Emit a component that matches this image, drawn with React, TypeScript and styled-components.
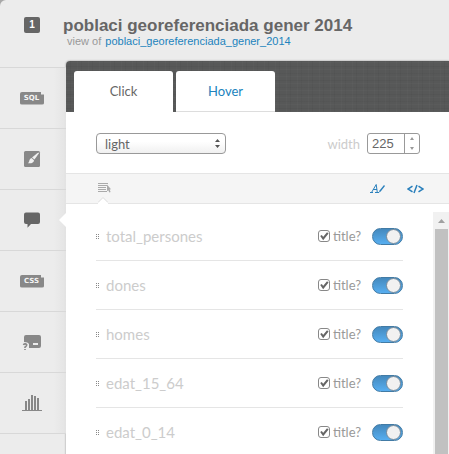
import React, { useState } from "react";
import styled, { createGlobalStyle } from "styled-components";

const sans = '"Liberation Sans", Arial, sans-serif';
const lato = 'Lato, "Open Sans", sans-serif';

const GlobalStyle = createGlobalStyle`
  * { box-sizing: border-box; }
  body { margin: 0; background: #a8a8a8; font-family: ${lato}; color: #666; }
  button, input, select { font-family: inherit; }
`;

const Shell = styled.div`
  display: grid;
  grid-template-columns: 66px minmax(0, 1fr);
  height: 100vh;
  overflow: hidden;
  background: #ececec;
  border-top-left-radius: 6px;
`;

const Sidebar = styled.nav`
  display: flex;
  flex-direction: column;
`;

const SideItem = styled.button<{ $first?: boolean; $active?: boolean }>`
  position: relative;
  flex: none;
  display: flex;
  align-items: center;
  justify-content: center;
  width: 100%;
  height: ${(p) => (p.$first ? 68 : 61)}px;
  padding: ${(p) => (p.$first ? "0 2px 17px 0" : "0 2px 0 0")};
  border: 0;
  border-bottom: 1px solid #d8d8d8;
  background: ${(p) =>
    p.$first ? "transparent" : "linear-gradient(90deg, transparent 54px, #e4e4e4)"};
  color: ${(p) => (p.$active ? "#666" : "#888")};
  cursor: pointer;

  svg { display: block; overflow: visible; }

  &::after {
    content: "";
    display: ${(p) => (p.$active ? "block" : "none")};
    position: absolute;
    z-index: 2;
    right: 0;
    top: 23px;
    border: 7px solid transparent;
    border-right-color: #fff;
    border-left: 0;
  }
`;

const CountBadge = styled.span`
  width: 16px;
  height: 16px;
  border-radius: 2px;
  background: #666;
  color: #fff;
  font: bold 10px/16px ${sans};
`;

const CodeBadge = styled.span`
  width: 24px;
  height: 13px;
  padding-right: 1px;
  border-radius: 2px;
  background: #888;
  clip-path: polygon(0 0, 21px 0, 21px 3px, 100% 3px, 100% 100%, 0 100%);
  color: #f4f4f4;
  font: bold 7px/13px "DejaVu Sans", sans-serif;
  text-align: center;
`;

const Main = styled.main`
  display: flex;
  flex-direction: column;
  min-width: 0;
`;

const Header = styled.header`
  flex: none;
  height: 61px;
  margin-left: -3px;
  padding-top: 16px;
  white-space: nowrap;
`;

const Title = styled.h1`
  margin: 0;
  font: bold 17px/19px ${sans};
  color: #666;
`;

const Subtitle = styled.p`
  margin: 0 0 0 4px;
  font: 11px/13px ${sans};
  color: #999;

  a { margin-left: 1px; color: #2183bd; text-decoration: none; }
`;

const Panel = styled.section`
  flex: 1;
  display: flex;
  flex-direction: column;
  min-height: 0;
  background: #fff;
  border-top-left-radius: 4px;
  box-shadow: 0 0 2px rgba(0, 0, 0, 0.45);
`;

const Tabs = styled.div`
  flex: none;
  display: flex;
  gap: 3px;
  padding: 10px 8px 0;
  border-top-left-radius: 4px;
  background:
    repeating-linear-gradient(90deg, rgba(255, 255, 255, 0.02) 0 1px, transparent 1px 4px, rgba(0, 0, 0, 0.03) 4px 5px, transparent 5px 11px),
    repeating-linear-gradient(0deg, rgba(255, 255, 255, 0.02) 0 1px, transparent 1px 3px, rgba(0, 0, 0, 0.03) 3px 4px, transparent 4px 7px),
    #575858;
`;

const Tab = styled.button<{ $active: boolean }>`
  width: 99px;
  height: 41px;
  padding: 0;
  border: 0;
  border-bottom: 1px solid ${(p) => (p.$active ? "#fff" : "#ddd")};
  border-radius: 3px 3px 0 0;
  background: #fff;
  color: ${(p) => (p.$active ? "#666" : "#2183bd")};
  font-size: 13px;
  cursor: pointer;
`;

const Settings = styled.div`
  flex: none;
  display: flex;
  align-items: center;
  justify-content: space-between;
  height: 61px;
  padding: 2px 29px 0 30px;
`;

const SelectBox = styled.label`
  position: relative;
  display: block;
  width: 130px;

  select {
    appearance: none;
    width: 100%;
    height: 21px;
    padding: 0 8px;
    border: 1px solid #999;
    border-radius: 4px;
    background: linear-gradient(#fff 40%, #f0f0f0);
    color: #666;
    font-size: 13px;
  }
  svg { position: absolute; right: 6px; top: 6px; pointer-events: none; }
`;

const WidthField = styled.label`
  display: flex;
  align-items: center;
  gap: 7px;
  color: #ccc;
  font-size: 13px;
`;

const Spinner = styled.span`
  display: flex;
  width: 53px;
  height: 21px;
  border: 1px solid #999;
  border-radius: 3px;
  background: #fff;

  input {
    width: 36px;
    padding: 0 4px;
    border: 0;
    background: none;
    color: #666;
    font: 13px ${sans};
  }
`;

const Steps = styled.span`
  flex: 1;
  display: flex;
  flex-direction: column;
  border-left: 1px solid #999;

  button {
    flex: 1;
    display: flex;
    align-items: center;
    justify-content: center;
    padding: 0;
    border: 0;
    background: none;
    color: #999;
  }
`;

const Toolbar = styled.div`
  flex: none;
  display: flex;
  align-items: center;
  gap: 22px;
  height: 31px;
  padding: 0 25px 0 32px;
  border: solid #e5e5e5;
  border-width: 1px 0;
  background: #f5f5f5;
`;

const Tool = styled.button<{ $active?: boolean }>`
  position: relative;
  display: flex;
  padding: 0;
  border: 0;
  margin-right: ${(p) => (p.$active ? "auto" : "0")};
  background: none;
  color: ${(p) => (p.$active ? "#aaa" : "#2b80bc")};
  cursor: pointer;
`;

const Caret = styled.svg`
  position: absolute;
  left: 0;
  top: 14px;
`;

const ListArea = styled.div`
  flex: 1;
  display: flex;
  align-items: flex-start;
  min-height: 0;
  padding-top: 8px;
  overflow: hidden;
`;

const Fields = styled.ul`
  flex: 1;
  min-width: 0;
  margin: 0;
  padding: 0 30px;
  list-style: none;
`;

const FieldRow = styled.li`
  display: flex;
  align-items: center;
  height: 49px;
  border-bottom: 1px solid #e5e5e5;
`;

const Grip = styled.svg`
  flex: none;
  margin-right: 6px;
`;

const FieldName = styled.span`
  flex: 1;
  min-width: 0;
  color: #ccc;
  font-size: 15px;
`;

const TitleCheck = styled.label`
  display: flex;
  align-items: center;
  gap: 3px;
  margin-right: 11px;
  color: #999;
  font-size: 13px;
`;

const CheckFace = styled.span`
  display: grid;

  > * { grid-area: 1 / 1; }

  input {
    appearance: none;
    width: 12px;
    height: 12px;
    margin: 0;
    border: 1px solid #888;
    border-radius: 3px;
    background: #fff;
  }
  svg { pointer-events: none; }
  input:not(:checked) + svg { visibility: hidden; }
`;

const Switch = styled.input`
  appearance: none;
  display: flex;
  align-items: center;
  justify-content: flex-start;
  width: 31px;
  height: 17px;
  margin: 0;
  padding: 0 1px;
  border: 1px solid #427ba5;
  border-radius: 9px;
  background: #ccc;
  cursor: pointer;

  &:checked {
    justify-content: flex-end;
    background: linear-gradient(#4489bd, #57aef0);
  }
  &::before {
    content: "";
    width: 13px;
    height: 13px;
    border: 1px solid #75899a;
    border-radius: 50%;
    background: #f1f1f1;
  }
`;

const ScrollTrack = styled.div`
  align-self: stretch;
  display: flex;
  flex-direction: column;
  width: 16px;
  padding: 0 1px 0 2px;
  background: #f1f1f1;
`;

const ScrollUp = styled.button`
  flex: none;
  display: flex;
  align-items: center;
  justify-content: center;
  height: 17px;
  padding: 0;
  border: 0;
  background: none;
`;

const ScrollThumb = styled.div`
  flex: 1;
  background: #c1c1c1;
`;

const BrushIcon = () => (
  <svg width="16" height="16" viewBox="0 0 16 16">
    <rect width="16" height="16" rx="1.5" fill="currentColor" />
    <path d="M15.5 1.5 10.5 8.5 8 6.5 13.5 2Z" fill="#f1f1f1" />
    <path d="M7.5 7 10 9.2C9.8 11.8 7.5 12.6 4 12.2 5.6 11.2 4.9 8 7.5 7Z" fill="#f1f1f1" />
  </svg>
);

const BubbleIcon = () => (
  <svg width="16" height="16" viewBox="0 0 16 16">
    <path
      d="M2 0.5H14Q16 0.5 16 2.5V10Q16 12 14 12H7L3.5 15.7V12H2Q0 12 0 10V2.5Q0 .5 2 .5Z"
      fill="currentColor"
    />
  </svg>
);

const LegendIcon = () => (
  <svg width="18" height="15" viewBox="0 0 18 15">
    <path
      d="M3 0H16Q18 0 18 2V11Q18 13 16 13H6V9Q5 7 1 7V2Q1 0 3 0ZM10 8V10H15V8Z"
      fill="currentColor"
      fillRule="evenodd"
    />
    <path
      d="M0.5 10Q.8 8.7 2.3 8.9 4.6 9.4 3.2 11L2 12.2V13M2 14V15"
      fill="none"
      stroke="currentColor"
      strokeWidth="1.6"
    />
  </svg>
);

const ChartIcon = () => (
  <svg width="20" height="16" viewBox="0 0 20 16">
    <path
      d="M3 6H5V15H3ZM6 4H8V15H6ZM9 0H11V15H9ZM12 1H14V15H12ZM15 3H17V15H15ZM0 15H20V16H0Z"
      fill="currentColor"
    />
  </svg>
);

const fields = ["total_persones", "dones", "homes", "edat_15_64", "edat_0_14"];

function Field({ name }: { name: string }) {
  return (
    <FieldRow>
      <Grip width="4" height="5" viewBox="0 0 4 5" aria-hidden="true">
        <path d="M0 0h1v1H0zM2 0h1v1H2zM0 2h1v1H0zM2 2h1v1H2zM0 4h1v1H0zM2 4h1v1H2z" fill="#888" />
      </Grip>
      <FieldName>{name}</FieldName>
      <TitleCheck>
        <CheckFace>
          <input type="checkbox" defaultChecked />
          <svg width="12" height="12" viewBox="0 0 12 12" aria-hidden="true">
            <path d="M3 5.5 5.2 8.5 9.8 2.8" fill="none" stroke="#666" strokeWidth="2" />
          </svg>
        </CheckFace>
        title?
      </TitleCheck>
      <Switch type="checkbox" role="switch" defaultChecked aria-label={name} />
    </FieldRow>
  );
}

export default function App() {
  const [tab, setTab] = useState("Click");
  const [width, setWidth] = useState(225);

  return (
    <>
      <GlobalStyle />
      <Shell>
        <Sidebar aria-label="Layer tools">
          <SideItem $first aria-label="Layer 1">
            <CountBadge>1</CountBadge>
          </SideItem>
          <SideItem><CodeBadge>SQL</CodeBadge></SideItem>
          <SideItem aria-label="Wizards"><BrushIcon /></SideItem>
          <SideItem $active aria-label="Infowindow"><BubbleIcon /></SideItem>
          <SideItem><CodeBadge>CSS</CodeBadge></SideItem>
          <SideItem aria-label="Legends"><LegendIcon /></SideItem>
          <SideItem aria-label="Filters"><ChartIcon /></SideItem>
        </Sidebar>
        <Main>
          <Header>
            <Title>poblaci georeferenciada gener 2014</Title>
            <Subtitle>
              view of <a href="#table">poblaci_georeferenciada_gener_2014</a>
            </Subtitle>
          </Header>
          <Panel>
            <Tabs role="tablist">
              {["Click", "Hover"].map((t) => (
                <Tab key={t} role="tab" aria-selected={tab === t} $active={tab === t} onClick={() => setTab(t)}>
                  {t}
                </Tab>
              ))}
            </Tabs>
            <Settings>
              <SelectBox>
                <select aria-label="Theme" defaultValue="light">
                  <option>light</option>
                  <option>dark</option>
                </select>
                <svg width="5" height="9" viewBox="0 0 5 9" aria-hidden="true">
                  <path d="M0 3 2.5 0 5 3ZM0 6H5L2.5 9Z" fill="#555" />
                </svg>
              </SelectBox>
              <WidthField>
                width
                <Spinner>
                  <input value={width} onChange={(e) => setWidth(Number(e.target.value) || 0)} />
                  <Steps>
                    <button aria-label="Increase" onClick={() => setWidth(width + 1)}>
                      <svg width="4" height="3" viewBox="0 0 4 3"><path d="M0 3 2 0 4 3Z" fill="currentColor" /></svg>
                    </button>
                    <button aria-label="Decrease" onClick={() => setWidth(width - 1)}>
                      <svg width="4" height="3" viewBox="0 0 4 3"><path d="M0 0H4L2 3Z" fill="currentColor" /></svg>
                    </button>
                  </Steps>
                </Spinner>
              </WidthField>
            </Settings>
            <Toolbar>
              <Tool $active aria-label="Fields">
                <svg width="13" height="11" viewBox="0 0 13 11">
                  <path d="M0 0H10V1H0ZM0 2H9V3H0ZM0 4H8V5H0ZM0 6H8V7H0ZM0 8H9V9H0Z" fill="currentColor" />
                  <path d="M9 1.5 13 6.2 11.6 6.6 12.6 9 11.3 9.5 10.3 7.3 9 8.3Z" fill="currentColor" />
                </svg>
                <Caret width="10" height="7" viewBox="0 0 10 7" aria-hidden="true">
                  <path d="M0 7V6L5 1 10 6V7Z" fill="#fff" />
                  <path d="M0 5.5 5 .5 10 5.5" fill="none" stroke="#ddd" />
                </Caret>
              </Tool>
              <Tool aria-label="Change labels">
                <svg width="15" height="11" viewBox="0 0 15 11">
                  <path d="M0 9.5H3M5 9.5H9M1.5 9.5 6.2 1.5 7.3 9.5M3 6.5H7" fill="none" stroke="currentColor" />
                  <path d="M9 9.5 9.5 7.5 14 2 15 3 10.7 8.5Z" fill="currentColor" />
                </svg>
              </Tool>
              <Tool aria-label="Edit HTML">
                <svg width="17" height="10" viewBox="0 0 17 10">
                  <path
                    d="M5.5 2.2 1 5 5.5 7.8M11.5 2.2 16 5 11.5 7.8M10 1 7 9"
                    fill="none"
                    stroke="currentColor"
                    strokeWidth="1.5"
                  />
                </svg>
              </Tool>
            </Toolbar>
            <ListArea>
              <Fields>
                {fields.map((f) => <Field key={f} name={f} />)}
              </Fields>
              <ScrollTrack>
                <ScrollUp aria-label="Scroll up">
                  <svg width="7" height="4" viewBox="0 0 7 4"><path d="M0 4 3.5 0 7 4Z" fill="#a0a0a0" /></svg>
                </ScrollUp>
                <ScrollThumb />
              </ScrollTrack>
            </ListArea>
          </Panel>
        </Main>
      </Shell>
    </>
  );
}
